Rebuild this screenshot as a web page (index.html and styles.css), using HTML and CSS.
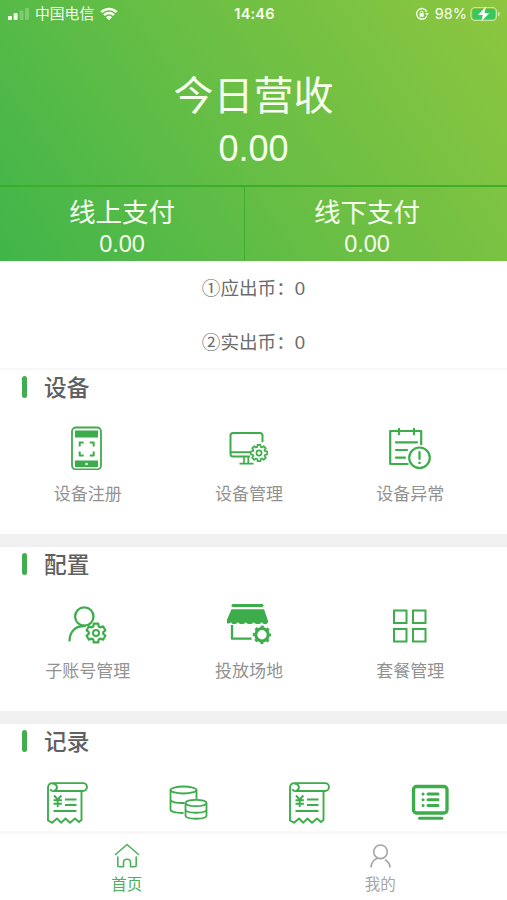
FILE: index.html
```html
<!DOCTYPE html>
<html lang="zh-CN">
<head>
<meta charset="utf-8">
<title>首页</title>
<link rel="stylesheet" href="styles.css">
</head>
<body>
<div class="app">
  <header class="hero">
    <div class="status">
      <div class="status-left">
        <svg class="signal" viewBox="0 0 22 12"><rect x="0" y="8" width="4" height="4" rx="1"/><rect x="5.600" y="5" width="4" height="7" rx="1"/><rect class="dim" x="11.500" y="2.500" width="4" height="9.500" rx="1"/><rect class="dim" x="17" y="0" width="4" height="12" rx="1"/></svg>
        <span class="carrier">中国电信</span>
        <svg class="wifi" viewBox="0 0 18 14"><path d="M1.300 5.200a11 11 0 0 1 15.400 0M4 8.100a7.200 7.200 0 0 1 10 0"/><path class="fill" d="M6 10.200a4.500 4.500 0 0 1 6 0L9 13.300z"/></svg>
      </div>
      <span class="clock">14:46</span>
      <div class="status-right">
        <svg class="lock" viewBox="0 0 14 14"><path d="M11.700 9.200A5.300 5.300 0 1 1 11.900 5"/><path class="fill" d="M10.100 6.300h3.800L12 9zM4.600 6.300h4.200v3.400H4.600z"/><path class="thin" d="M5.400 6.500V5.400a1.300 1.300 0 0 1 2.600 0v1.100"/></svg>
        <span class="percent">98%</span>
        <svg class="battery" viewBox="0 0 31 16"><rect class="shell" x="1" y="1.500" width="25.500" height="13" rx="4"/><rect class="level" x="2.500" y="3" width="22.500" height="10" rx="2.500"/><path class="shell-tip" d="M28 5.500v5q2-.7 2-2.500t-2-2.500z"/><path class="bolt" d="M16 .5 8 9h4.800l-1.600 6.500L19.500 7h-5z"/></svg>
      </div>
    </div>
    <div class="today">
      <div class="today-title">今日营收</div>
      <div class="today-value">0.00</div>
    </div>
    <div class="pays">
      <div class="pay"><div class="pay-title">线上支付</div><div class="pay-value">0.00</div></div>
      <div class="pay"><div class="pay-title">线下支付</div><div class="pay-value">0.00</div></div>
    </div>
  </header>

  <div class="coins">
    <div class="coin">①应出币：<span class="num">0</span></div>
    <div class="coin">②实出币：<span class="num">0</span></div>
  </div>

  <section class="section">
    <h2 class="section-title">设备</h2>
    <div class="grid three">
      <div class="item">
        <svg class="icon" viewBox="66 426 44 44"><rect x="72" y="427.500" width="29" height="42" rx="4" stroke-width="1.800"/><path class="fill" d="M75 430.500h23v7H75zM75 460.500h23v6.500H75z"/><circle class="paper" cx="86.500" cy="464" r="1.300"/><path stroke-width="2" d="M79.700 446.500v-4h4M89.700 442.500h4v4M93.700 451.500v4h-4M83.700 455.500h-4v-4"/></svg>
        <span class="label">设备注册</span>
      </div>
      <div class="item">
        <svg class="icon" viewBox="227 426 44 44"><path stroke-width="2" d="M250 456.500H233q-2.500 0-2.500-2.500V435.500q0-2.500 2.500-2.500h27q2.500 0 2.500 2.500V442M231 452.300h19"/><path stroke-width="1.700" d="M244 457v6.500M248.300 457v6.500M239.500 463.700h14"/><g transform="translate(259 453)" stroke-width="1.600"><path d="M8.150-1.580V1.580L5.960 1.710 5.420 3 6.880 4.640 4.640 6.880 3 5.420 1.710 5.960 1.580 8.150H-1.580L-1.710 5.960-3 5.420-4.640 6.880-6.880 4.640-5.420 3-5.960 1.710-8.150 1.580V-1.580L-5.960-1.710-5.420-3-6.880-4.640-4.640-6.880-3-5.420-1.710-5.960-1.580-8.150H1.580L1.710-5.960 3-5.420 4.640-6.880 6.880-4.640 5.420-3 5.960-1.710z"/><circle r="2.600"/></g></svg>
        <span class="label">设备管理</span>
      </div>
      <div class="item">
        <svg class="icon" viewBox="389 426 44 44"><path stroke-width="2.200" d="M409.500 464H391.200V431h31v14"/><path stroke-width="2.200" stroke-linecap="round" d="M400 428.800v5.500M415 428.800v5.500M397 442.300h21M397 450h11M397 457.700h9"/><circle cx="420.500" cy="457.800" r="10.300" stroke-width="2.200"/><path stroke-width="2.300" d="M420.500 451.300v8.500M420.500 461.800v2.300"/></svg>
        <span class="label">设备异常</span>
      </div>
    </div>
  </section>

  <section class="section">
    <h2 class="section-title">配置</h2>
    <div class="grid three">
      <div class="item">
        <svg class="icon" viewBox="66 603 44 44"><circle cx="84.300" cy="616.500" r="9.200" stroke-width="2.300"/><path stroke-width="2.300" stroke-linecap="round" d="M69.500 640.500c.5-9 6-14.500 15-14.500"/><g transform="translate(96 633)"><path stroke-width="2.200" d="M9.400 2.700 7 6.700 4.300 5.600 2.700 6.500 2.300 9.300H-2.300L-2.700 6.500-4.300 5.600-7 6.700-9.400 2.700-7.200.9V-.9L-9.400-2.700-7-6.700-4.300-5.600-2.700-6.500-2.300-9.300H2.300L2.700-6.500 4.300-5.600 7-6.700 9.400-2.700 7.200-.9V.9z"/><circle r="3" stroke-width="2"/></g></svg>
        <span class="label">子账号管理</span>
      </div>
      <div class="item">
        <svg class="icon" viewBox="227 603 44 44"><path stroke-width="3" stroke-linecap="round" d="M233 605.500h29"/><path class="fill" d="M231.500 609.200h32.500l4 11.500c.7 4-4.500 4.600-6.200 1.500-1.800 2.500-6 2.500-8 0-2 2.500-6 2.500-8 0-2 2.500-6 2.500-8 0-2 2.500-5.500 2.500-7 0-1.500 2-4.500 2-4.500-1z"/><path stroke-width="2.300" d="M232 625v13.700h19.500"/><circle cx="262" cy="634.800" r="6.200" stroke-width="3"/><circle cx="262" cy="634.800" r="8.200" stroke-width="2" stroke-dasharray="3.200 3.240" stroke-dashoffset="1.600"/></svg>
        <span class="label">投放场地</span>
      </div>
      <div class="item">
        <svg class="icon" viewBox="389 603 44 44"><path stroke-width="2" stroke-linejoin="miter" d="M395 610.500h12.500v12.500H395zM414 610.500h12.500v12.500H414zM395 629h12.500v12.500H395zM414 629h12.500v12.500H414z"/></svg>
        <span class="label">套餐管理</span>
      </div>
    </div>
  </section>

  <section class="section last">
    <h2 class="section-title">记录</h2>
    <div class="grid four">
      <div class="item">
        <svg class="icon" viewBox="45 780.500 44 44"><path stroke-width="1.900" d="M54 791.500H83a3.900 3.900 0 0 0 0-7.900H52.500q-4.500 0-4.500 5V821l4 2.200 5-4.200 4.300 4.200L65.500 819l4.500 4.200 5-4.200 4 3.500 2.500-2V791.500M52 784c5.500-.5 6.500 6 2 7.500q-3 .6-3.300-2"/><path stroke-width="1.900" d="m54 796 3.700 4 3.700-4M57.700 800v7.500M53.500 800.700h8.400M53.500 804.200h8.400M65 800h11.500M65 805.500h11.500M53.500 811.500h23"/></svg>
      </div>
      <div class="item">
        <svg class="icon" viewBox="166 780.500 44 44"><g stroke-width="1.800"><ellipse cx="183.500" cy="790.500" rx="13" ry="3.500"/><path d="M170.500 790.500V810c0 2 5 3.500 13 3.500M196.500 790.500v9M170.500 800c0 2.500 6 3.700 14 3.500"/><ellipse cx="196" cy="803.500" rx="10.500" ry="3.200"/><path d="M185.500 803.500V816c0 4.300 21 4.300 21 0V803.500M185.500 810c0 4.300 21 4.300 21 0"/></g></svg>
      </div>
      <div class="item">
        <svg class="icon" viewBox="45 780.500 44 44"><path stroke-width="1.900" d="M54 791.500H83a3.900 3.900 0 0 0 0-7.900H52.500q-4.500 0-4.500 5V821l4 2.200 5-4.200 4.300 4.200L65.500 819l4.500 4.200 5-4.200 4 3.500 2.500-2V791.500M52 784c5.500-.5 6.500 6 2 7.500q-3 .6-3.300-2"/><path stroke-width="1.900" d="m54 796 3.700 4 3.700-4M57.700 800v7.500M53.500 800.700h8.400M53.500 804.200h8.400M65 800h11.500M65 805.500h11.500M53.500 811.500h23"/></svg>
      </div>
      <div class="item">
        <svg class="icon" viewBox="408 780.500 44 44"><rect x="413.500" y="787" width="33.500" height="26.500" rx="3" stroke-width="3.300"/><path stroke-width="3" stroke-linecap="round" d="M428 794.500h10M428 800.200h10M428 805.900h10M423 794.500h.1M423 800.200h.1M423 805.900h.1M419.500 818.700h22.500"/></svg>
      </div>
    </div>
  </section>

  <nav class="tabs">
    <div class="tab active">
      <svg class="tab-icon" viewBox="114 843 26 26"><path d="m115.500 854.500 11.500-10 11.500 10M117.800 857v8q0 1.700 1.700 1.700h4v-4.200q0-3.200 3.500-3.200t3.500 3.200v4.200h4q1.700 0 1.700-1.700v-8"/></svg>
      <span>首页</span>
    </div>
    <div class="tab">
      <svg class="tab-icon" viewBox="367 843 26 26"><circle cx="380.500" cy="851.800" r="6.800"/><path d="M371 867c.3-4 2.500-7 6-8.500M390 867c-.3-3.500-2-5.500-4.500-7"/></svg>
      <span>我的</span>
    </div>
  </nav>
</div>
</body>
</html>
```
FILE: styles.css
```css
* { box-sizing: border-box; }

body {
  margin: 0;
  background: #fff;
  font-family: "Liberation Sans", "Noto Sans CJK SC", sans-serif;
}

.app {
  display: flex;
  flex-direction: column;
  height: 900px;
  overflow: hidden;
}

svg { display: block; fill: none; }

/* Revenue header */
.hero {
  flex: none;
  height: 261px;
  display: flex;
  flex-direction: column;
  color: #f6ffee;
  background: linear-gradient(55deg, #40b54a 0%, #66be45 46%, #8dc63f 100%);
}

.status {
  height: 28px;
  display: grid;
  grid-template-columns: 1fr auto 1fr;
  align-items: center;
  padding: 0 6px 0 8px;
  font-size: 14px;
  line-height: 28px;
}

.status-left, .status-right { display: flex; align-items: center; }
.status-right { justify-content: flex-end; }
.signal { width: 22px; height: 12px; fill: #f6ffee; margin-right: 5px; }
.signal .dim { opacity: .25; }
.carrier { font-size: 14.8px; margin-right: 6px; }
.wifi { width: 18px; height: 14px; stroke: #f6ffee; stroke-width: 2.5; }
.wifi .fill, .lock .fill { fill: #f6ffee; stroke: none; }
.clock { font-family: Inter, sans-serif; font-size: 14.5px; font-weight: 600; letter-spacing: .2px; }
.lock { width: 14px; height: 14px; stroke: #f6ffee; stroke-width: 1.4; margin-right: 6px; }
.lock .thin { stroke-width: 1; }
.percent { font-family: Inter, sans-serif; font-size: 14.5px; margin-right: 3px; }
.battery { width: 31px; height: 16px; }
.battery .shell { stroke: #c5e69c; stroke-width: 1.2; }
.battery .shell-tip { fill: #c5e69c; }
.battery .level { fill: #36c85c; }
.battery .bolt { fill: #fff; }

.today { flex: 1; text-align: center; padding-top: 39px; }
.today-title { font-size: 40px; line-height: 58px; }
.today-value { font-size: 36px; line-height: 47px; }

.pays {
  height: 76px;
  display: flex;
  border-top: 2px solid #3bae2b;
  padding-right: 18px;
}

.pay { flex: 1; text-align: center; padding-top: 8px; }
.pay:first-child { border-right: 1px solid #3bae2b; }
.pay-title { font-size: 26.5px; line-height: 36px; }
.pay-value { font-size: 23.5px; line-height: 26px; }

/* Coin counters */
.coins { flex: none; height: 109px; border-bottom: 2px solid #f8f8f8; }
.coin {
  height: 54px;
  line-height: 56px;
  text-align: center;
  font-size: 18.6px;
  color: #6c6c6c;
}
.coin:first-child { border-bottom: 1px solid #fdfdfd; }

/* Feature groups */
.section {
  flex: none;
  height: 177px;
  border-bottom: 13px solid #f0f0f0;
}
.section.last { height: auto; flex: 1; border-bottom: 0; min-height: 0; }

.section-title {
  display: flex;
  align-items: center;
  height: 36px;
  margin: 0 0 20px;
  padding-left: 22px;
  font-size: 22.7px;
  font-weight: 500;
  line-height: 36px;
  color: #606060;
}
.section-title::before {
  content: "";
  width: 5px;
  height: 22px;
  margin: 0 17px 2px 0;
  border-radius: 3px;
  background: #40ad4f;
}

.grid { display: grid; width: 484px; margin-left: 7px; }
.three { grid-template-columns: repeat(3, 1fr); }
.four { grid-template-columns: repeat(4, 1fr); margin-left: 6px; }
.item { display: flex; flex-direction: column; align-items: center; }
.icon { width: 44px; height: 44px; stroke: #3dad4b; stroke-linejoin: round; }
.icon .fill { fill: #3dad4b; stroke: none; }
.icon .paper { fill: #fff; stroke: none; }
.label { margin-top: 12px; font-size: 17px; line-height: 26px; color: #929292; }

/* Bottom navigation */
.tabs {
  flex: none;
  height: 69px;
  display: flex;
  border-top: 3px solid #f8f8f8;
  background: #fff;
}
.tab {
  flex: 1;
  display: flex;
  flex-direction: column;
  align-items: center;
  padding-top: 9px;
  font-size: 15.5px;
  line-height: 31px;
  color: #a6a6a6;
}
.tab.active { color: #4cb05c; }
.tab-icon { width: 26px; height: 26px; stroke: currentColor; stroke-width: 1.6; stroke-linecap: round; stroke-linejoin: round; }
```
